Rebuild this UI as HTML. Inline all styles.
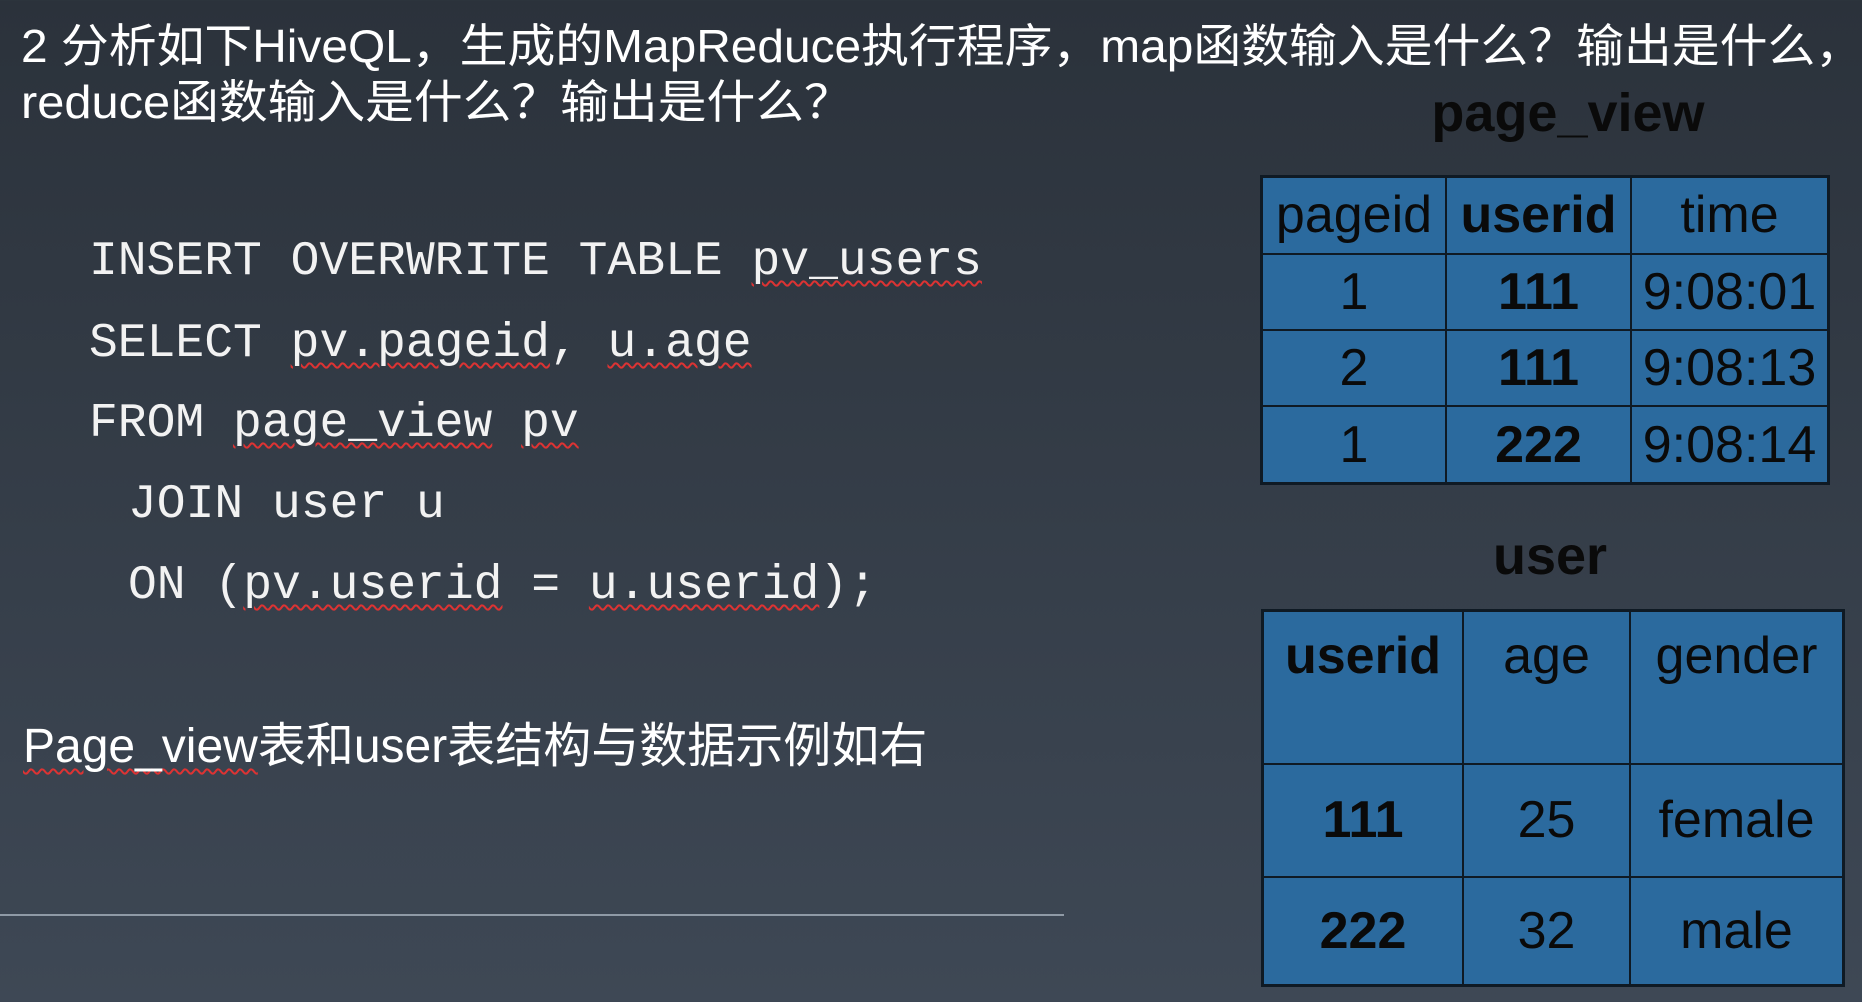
<!DOCTYPE html>
<html><head><meta charset="utf-8"><style>
*{margin:0;padding:0}
body{width:1862px;height:1002px;overflow:hidden;position:relative;background:linear-gradient(#2b323b,#3e4855);font-family:"Liberation Sans","Noto Sans CJK SC",sans-serif;}
.t{position:absolute;color:#fff;white-space:nowrap;transform-origin:0 0;}
.code{position:absolute;color:#f2f2f2;font-family:"Liberation Mono",monospace;font-size:48px;white-space:nowrap;}
.u{text-decoration:underline wavy #d33;text-decoration-thickness:2px;text-underline-offset:6px}
table{position:absolute;border-collapse:collapse;background:#2b6a9e;font-size:52px;color:#0a0a0a;}
td{border:2px solid #0f1a24;text-align:center;padding:0}
table{border:3px solid #0f1a24}
.b{font-weight:bold}
.h{position:absolute;font-weight:bold;color:#0a0a0a;font-size:54px;}
</style></head><body>
<div class="t" style="left:21px;top:10px;font-size:46px;transform:scaleX(1.04)">2 分析如下HiveQL，生成的MapReduce执行程序，map函数输入是什么？输出是什么，</div>
<div class="t" style="left:21px;top:66px;font-size:46px;transform:scaleX(1.06)">reduce函数输入是什么？输出是什么？</div>
<div class="code" style="left:89px;top:235px">INSERT OVERWRITE TABLE <span class="u">pv_users</span></div>
<div class="code" style="left:89px;top:317px">SELECT <span class="u">pv.pageid</span>, <span class="u">u.age</span></div>
<div class="code" style="left:89px;top:397px">FROM <span class="u">page_view</span> <span class="u">pv</span></div>
<div class="code" style="left:128px;top:478px">JOIN user u</div>
<div class="code" style="left:128px;top:559px">ON (<span class="u">pv.userid</span> = <span class="u">u.userid</span>);</div>
<div class="t" style="left:23px;top:706px;font-size:48px;transform:scaleX(1.0)"><span class="u">Page_view</span>表和user表结构与数据示例如右</div>
<div style="position:absolute;left:0;top:914px;width:1064px;height:2px;background:#8f9aa6"></div>
<div class="h" style="left:1360px;top:82px;width:416px;text-align:center">page_view</div>
<table style="left:1260px;top:175px;width:570px;height:310px">
<tr style="height:77px"><td style="width:182px">pageid</td><td class="b" style="width:183px">userid</td><td>time</td></tr>
<tr><td>1</td><td class="b">111</td><td>9:08:01</td></tr>
<tr><td>2</td><td class="b">111</td><td>9:08:13</td></tr>
<tr><td>1</td><td class="b">222</td><td>9:08:14</td></tr>
</table>
<div class="h" style="left:1350px;top:525px;width:400px;text-align:center">user</div>
<table style="left:1261px;top:609px;width:584px;height:378px">
<tr style="height:153px"><td class="b" style="width:198px;vertical-align:top;padding-top:14px">userid</td><td style="width:165px;vertical-align:top;padding-top:14px">age</td><td style="vertical-align:top;padding-top:14px">gender</td></tr>
<tr style="height:113px"><td class="b">111</td><td>25</td><td>female</td></tr>
<tr><td class="b">222</td><td>32</td><td>male</td></tr>
</table>
</body></html>
